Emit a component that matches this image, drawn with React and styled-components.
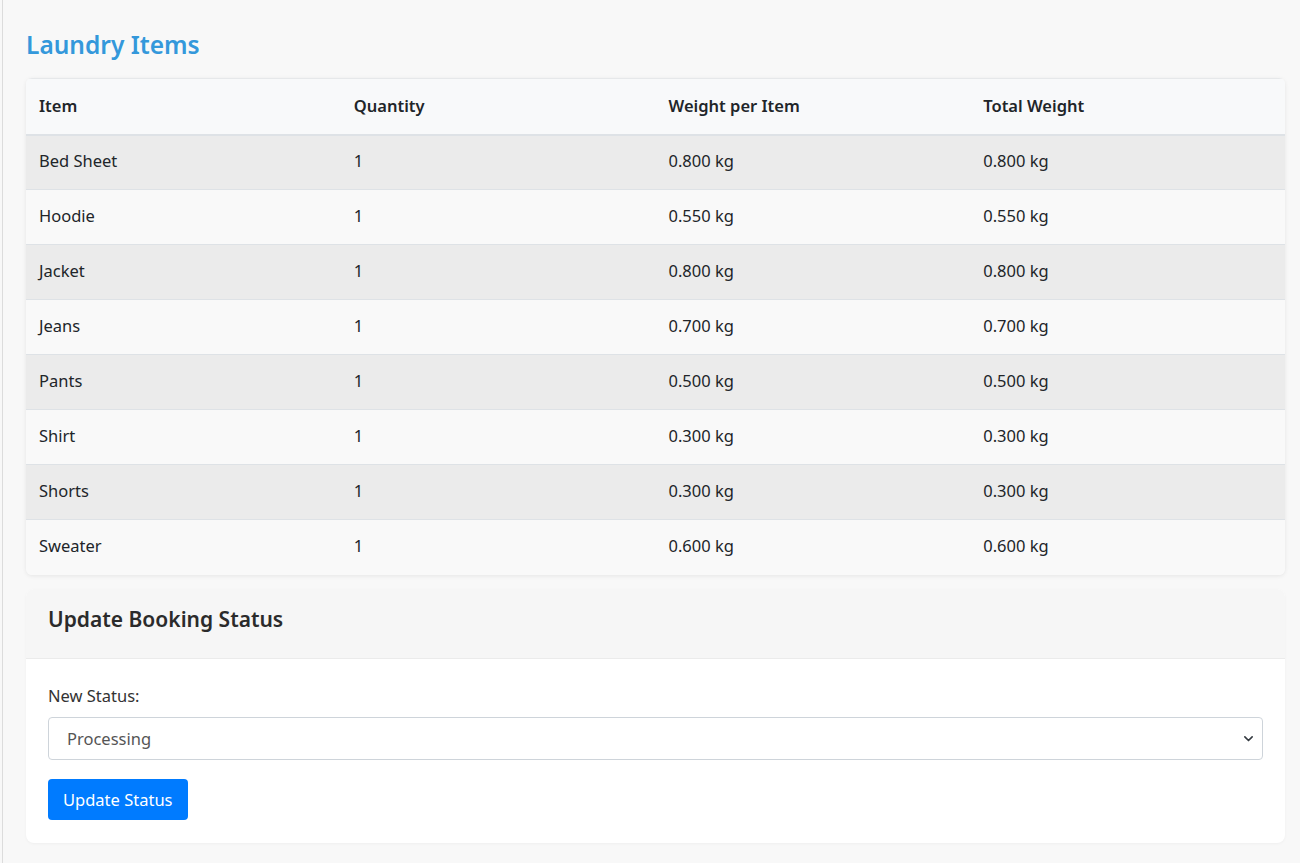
import React, { useState } from 'react'
import styled, { createGlobalStyle } from 'styled-components'

const items = [
  { name: 'Bed Sheet', qty: 1, weight: 0.8 },
  { name: 'Hoodie', qty: 1, weight: 0.55 },
  { name: 'Jacket', qty: 1, weight: 0.8 },
  { name: 'Jeans', qty: 1, weight: 0.7 },
  { name: 'Pants', qty: 1, weight: 0.5 },
  { name: 'Shirt', qty: 1, weight: 0.3 },
  { name: 'Shorts', qty: 1, weight: 0.3 },
  { name: 'Sweater', qty: 1, weight: 0.6 },
]

const statuses = ['Pending', 'Processing', 'Ready for Pickup', 'Completed', 'Cancelled']

const App = () => {
  const [status, setStatus] = useState('Processing')

  return (
    <>
      <GlobalStyle />
      <Main>
        <Title>Laundry Items</Title>
        <TableCard>
          <Table>
            <thead>
              <tr>
                <Th>Item</Th>
                <Th>Quantity</Th>
                <Th>Weight per Item</Th>
                <Th>Total Weight</Th>
              </tr>
            </thead>
            <tbody>
              {items.map((item, index) => (
                <Row key={item.name} $odd={index % 2 === 0}>
                  <Td>{item.name}</Td>
                  <Td>{item.qty}</Td>
                  <Td>{item.weight.toFixed(3)} kg</Td>
                  <Td>{(item.weight * item.qty).toFixed(3)} kg</Td>
                </Row>
              ))}
            </tbody>
          </Table>
        </TableCard>

        <StatusCard>
          <CardHeader>
            <CardTitle>Update Booking Status</CardTitle>
          </CardHeader>
          <CardBody>
            <Label htmlFor="status">New Status:</Label>
            <SelectWrap>
              <Select id="status" value={status} onChange={(e) => setStatus(e.target.value)}>
                {statuses.map((s) => (
                  <option key={s} value={s}>{s}</option>
                ))}
              </Select>
              <Chevron viewBox="0 0 16 16">
                <path d="M3.5 6l4.5 4.5L12.5 6" fill="none" stroke="#343a40" strokeWidth="2" strokeLinecap="round" strokeLinejoin="round" />
              </Chevron>
            </SelectWrap>
            <Button>Update Status</Button>
          </CardBody>
        </StatusCard>
      </Main>
    </>
  )
}

export default App

const GlobalStyle = createGlobalStyle`
  html, body {
    margin: 0;
    padding: 0;
    background: #f8f8f8;
  }
  body {
    font-family: "Noto Sans", "Open Sans", sans-serif;
    color: #212529;
  }
  * { box-sizing: border-box; }
`

const Main = styled.div`
  margin-left: 2px;
  border-left: 1px solid #dcdcdc;
  padding: 26px 15px 20px 23px;
  min-height: 863px;
  display: flex;
  flex-direction: column;
`

const Title = styled.h2`
  margin: 0 0 14px;
  font-size: 24.5px;
  font-weight: 600;
  color: #3498db;
  line-height: 38px;
`

const TableCard = styled.div`
  background: #f9f9f9;
  border-radius: 6px;
  box-shadow: 0 1px 4px rgba(0, 0, 0, 0.08);
  overflow: hidden;
`

const Table = styled.table`
  width: 100%;
  border-collapse: collapse;
  table-layout: fixed;
  font-size: 16.5px;
`

const Th = styled.th`
  text-align: left;
  font-weight: 600;
  background: #f8f9fa;
  height: 56px;
  padding: 0 13px 2px;
  border-bottom: 2px solid #dee2e6;
  border-top: 1px solid #e6e8ea;
`

const Row = styled.tr`
  background: ${(p) => (p.$odd ? '#ebebeb' : '#f9f9f9')};
`

const Td = styled.td`
  height: 55px;
  padding: 0 13px 3px;
  border-top: 1px solid #dee2e6;
  color: #212529;
`

const StatusCard = styled.div`
  margin-top: 14px;
  background: #fff;
  border-radius: 8px;
  overflow: hidden;
  box-shadow: 0 1px 3px rgba(0, 0, 0, 0.04);
`

const CardHeader = styled.div`
  background: #f6f6f6;
  height: 70px;
  padding: 0 22px 8px;
  display: flex;
  align-items: center;
  border-bottom: 1px solid #ebebeb;
`

const CardTitle = styled.h3`
  margin: 0;
  font-size: 21px;
  font-weight: 600;
  color: #2b2b2b;
`

const CardBody = styled.div`
  padding: 25px 22px 23px;
  display: flex;
  flex-direction: column;
  align-items: flex-start;
`

const Label = styled.label`
  font-size: 16.5px;
  color: #333;
  margin-bottom: 10px;
`

const SelectWrap = styled.div`
  position: relative;
  width: 100%;
  margin-bottom: 19px;
`

const Select = styled.select`
  appearance: none;
  width: 100%;
  height: 43px;
  padding: 0 18px;
  font-family: inherit;
  font-size: 16.5px;
  color: #555;
  background: #fff;
  border: 1px solid #ced4da;
  border-radius: 4px;
`

const Chevron = styled.svg`
  position: absolute;
  right: 8px;
  top: 15px;
  width: 13px;
  height: 13px;
  pointer-events: none;
`

const Button = styled.button`
  height: 41px;
  padding: 0 15px;
  font-family: inherit;
  font-size: 16.5px;
  color: #fff;
  background: #007bff;
  border: none;
  border-radius: 4px;
  cursor: pointer;
`
